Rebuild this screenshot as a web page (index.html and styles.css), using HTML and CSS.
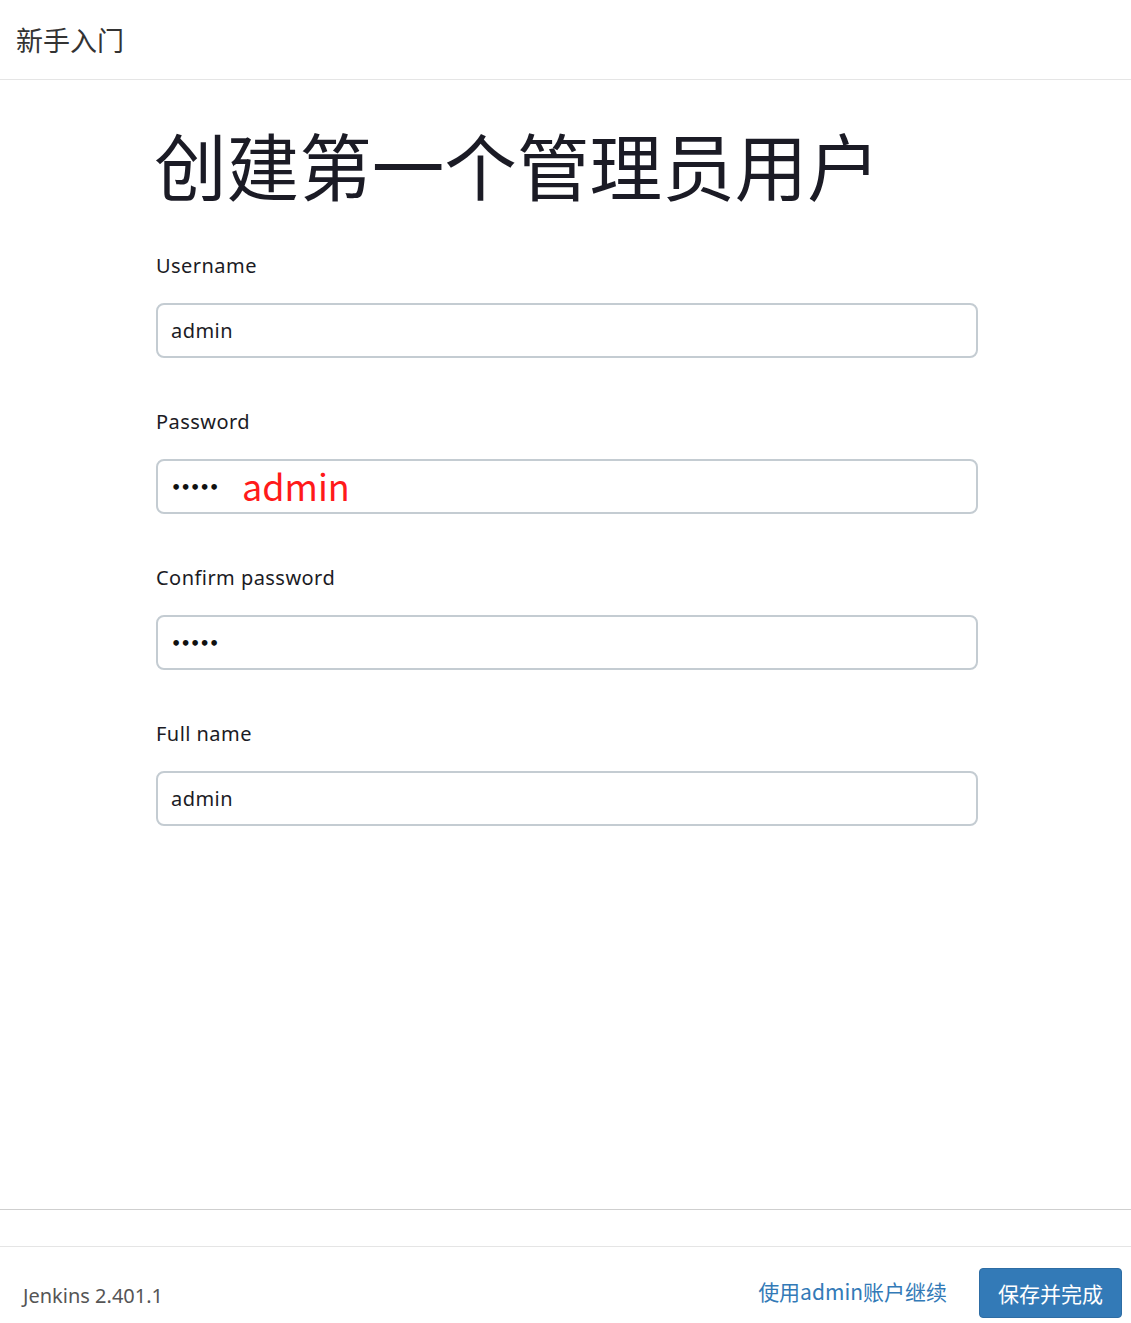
FILE: index.html
```html
<!DOCTYPE html>
<html lang="zh-CN">
<head>
<meta charset="utf-8">
<title>新手入门</title>
<link rel="stylesheet" href="styles.css">
</head>
<body>
<div class="page">
  <header class="topbar">
    <div class="topbar-title">新手入门</div>
  </header>
  <main class="main">
    <div class="form-wrap">
      <h1 class="heading">创建第一个管理员用户</h1>
      <div class="field">
        <label class="label">Username</label>
        <div class="input">admin</div>
      </div>
      <div class="field">
        <label class="label">Password</label>
        <div class="input input-pw"><span class="dots">•••••</span><span class="note">admin</span></div>
      </div>
      <div class="field">
        <label class="label">Confirm password</label>
        <div class="input input-pw"><span class="dots">•••••</span></div>
      </div>
      <div class="field">
        <label class="label">Full name</label>
        <div class="input">admin</div>
      </div>
    </div>
  </main>
  <div class="spacer-bar"></div>
  <footer class="footer">
    <div class="version">Jenkins 2.401.1</div>
    <div class="actions">
      <a class="link">使用admin账户继续</a>
      <button class="btn">保存并完成</button>
    </div>
  </footer>
</div>
</body>
</html>
```
FILE: styles.css
```css
* { box-sizing: border-box; }
html, body { margin: 0; padding: 0; background: #fff; }
body {
  font-family: "Noto Sans", "Noto Sans CJK SC", sans-serif;
  color: #1b1b25;
}
.page {
  height: 1323px;
  display: flex;
  flex-direction: column;
}
.topbar {
  height: 80px;
  border-bottom: 1px solid #e5e5e5;
  display: flex;
  align-items: center;
  padding: 0 16px;
}
.topbar-title {
  font-family: "Noto Sans CJK SC", sans-serif;
  font-size: 27px;
  color: #333;
  line-height: 1;
}
.main {
  flex: 1;
}
.form-wrap {
  width: 822px;
  margin-left: 156px;
  padding-top: 36px;
}
.heading {
  margin: 0 0 40px -2px;
  font-family: "Noto Sans CJK SC", sans-serif;
  font-size: 72.6px;
  font-weight: 400;
  line-height: 96px;
  color: #1b1b25;
}
.field { margin-bottom: 50px; }
.label {
  display: block;
  font-size: 20px;
  letter-spacing: 0.45px;
  line-height: 28px;
  height: 28px;
  margin-bottom: 23px;
  color: #1b1b25;
}
.input {
  position: relative;
  height: 55px;
  border: 2px solid #c4ccd2;
  border-radius: 8px;
  padding: 0 13px;
  display: flex;
  align-items: center;
  font-size: 20px;
  letter-spacing: 0.45px;
  color: #1b1b25;
}
.dots {
  font-family: "DejaVu Sans", sans-serif;
  font-size: 16px;
  font-weight: 700;
  letter-spacing: -0.7px;
  color: #111;
  margin-top: 2px;
}
.note {
  position: absolute;
  left: 84px;
  top: 2px;
  font-size: 36px;
  line-height: 44px;
  letter-spacing: 0;
  color: #ff1a1a;
  font-family: "Noto Sans CJK SC", sans-serif;
}
.spacer-bar {
  height: 37px;
  border-top: 1px solid #cfcfcf;
}
.footer {
  height: 77px;
  border-top: 1px solid #e5e5e5;
  display: flex;
  align-items: center;
  justify-content: space-between;
  padding: 0 9px 0 23px;
}
.version {
  font-size: 20px;
  color: #555;
  margin-top: 20px;
}
.actions {
  display: flex;
  align-items: center;
  gap: 32px;
  margin-top: 16px;
}
.link {
  font-family: "Noto Sans CJK SC", sans-serif;
  font-size: 21px;
  color: #337ab7;
  text-decoration: none;
  margin-top: -4px;
}
.btn {
  background: #337ab7;
  color: #fff;
  border: 1px solid #2e6da4;
  border-radius: 4px;
  font-family: "Noto Sans CJK SC", sans-serif;
  font-size: 21px;
  height: 50px;
  width: 143px;
  padding: 0;
}
```
